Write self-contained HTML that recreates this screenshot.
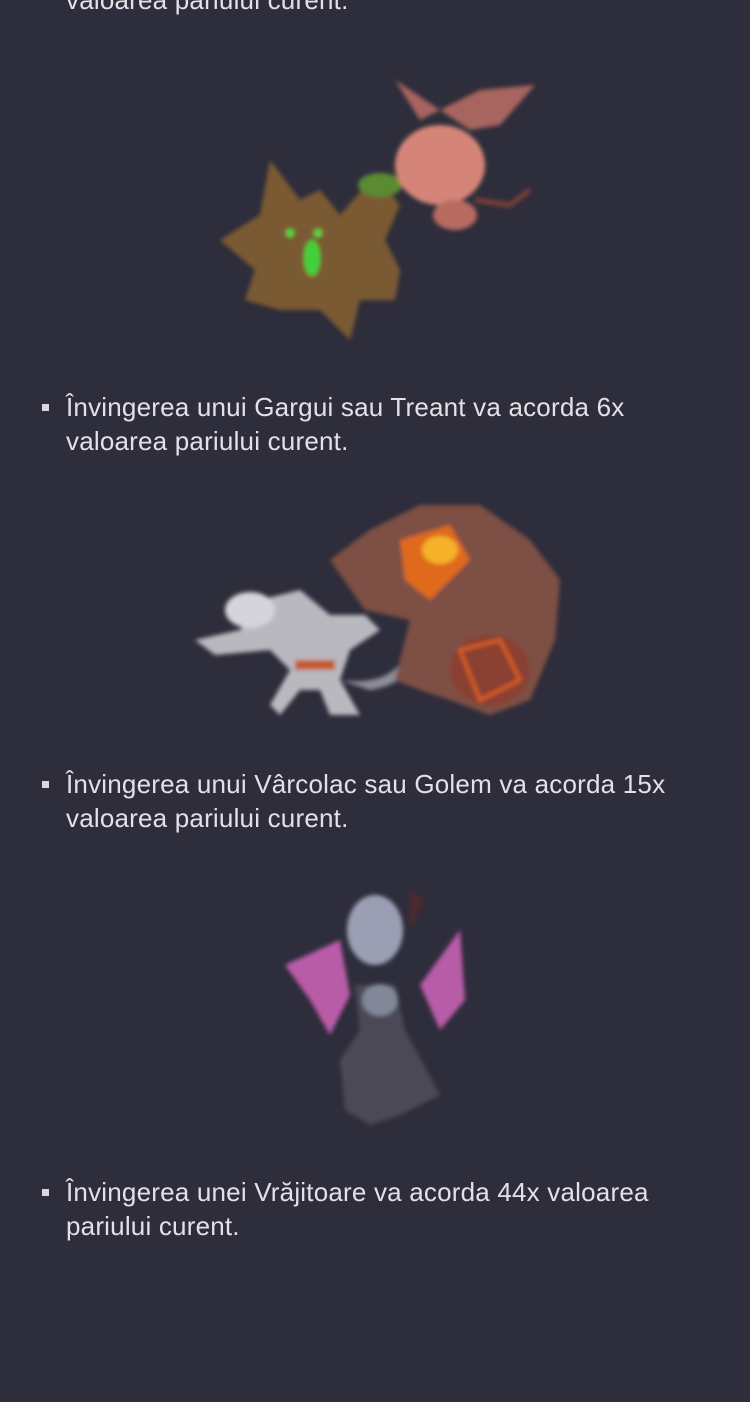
<!DOCTYPE html>
<html><head><meta charset="utf-8"><style>
html,body{margin:0;padding:0}
body{width:750px;height:1402px;background:#2e2d3b;position:relative;overflow:hidden;font-family:"Liberation Sans",sans-serif;color:#e2e2e6}
.t{position:absolute;left:66px;width:625px;font-size:26px;line-height:34px;letter-spacing:0.2px}
.b{position:absolute;left:42px;width:7px;height:7px;background:#d8d8dc}
svg{position:absolute;left:0;top:0}
</style></head><body>
<div class="t" style="top:-17px">valoarea pariului curent.</div>

<svg width="750" height="1402" viewBox="0 0 750 1402">
<defs><filter id="f"><feGaussianBlur stdDeviation="2"/></filter></defs>
<g filter="url(#f)">
<path d="M270 160 L300 200 L320 190 L340 215 L375 175 L400 205 L385 240 L400 270 L395 300 L360 300 L350 340 L320 310 L280 310 L245 300 L255 270 L220 240 L260 215 Z" fill="#7a5a32"/>
<ellipse cx="312" cy="258" rx="8" ry="18" fill="#3fd23a"/>
<circle cx="290" cy="233" r="4" fill="#4fe04a"/><circle cx="318" cy="233" r="4" fill="#4fe04a"/>
<ellipse cx="380" cy="185" rx="22" ry="12" fill="#5c8a30"/>
<path d="M395 80 L420 120 L480 90 L535 85 L500 125 L470 130 Z" fill="#a8655e"/>
<ellipse cx="440" cy="165" rx="45" ry="40" fill="#d58578"/>
<ellipse cx="455" cy="215" rx="22" ry="15" fill="#b86a60"/>
<path d="M475 200 L510 205 L530 190" stroke="#7a4036" stroke-width="5" fill="none"/>
<path d="M195 640 L240 630 L260 600 L300 590 L330 615 L365 615 L380 630 L350 650 L340 680 L360 715 L330 715 L320 690 L300 690 L280 715 L270 705 L290 670 L270 650 L215 655 Z" fill="#b9b8bf"/>
<ellipse cx="250" cy="610" rx="25" ry="18" fill="#d5d4da"/>
<path d="M340 680 Q410 690 415 620 Q430 680 370 690 Z" fill="#8e8d96"/>
<rect x="295" y="660" width="40" height="10" fill="#c45a2c"/>
<path d="M330 560 L370 530 L420 505 L480 505 L530 540 L560 580 L555 640 L530 700 L490 715 L450 700 L420 690 L395 680 L410 620 L365 610 Z" fill="#7e5044"/>
<path d="M400 540 L450 525 L470 560 L430 600 L405 580 Z" fill="#e06a1c"/>
<ellipse cx="440" cy="550" rx="18" ry="14" fill="#f6b22a"/>
<ellipse cx="490" cy="670" rx="40" ry="35" fill="#8a4030"/>
<path d="M460 650 L500 640 L520 680 L480 700 Z" fill="none" stroke="#e8621a" stroke-width="3"/>
<path d="M285 965 L340 940 L350 995 L330 1035 L310 1000 Z" fill="#b95ba8"/>
<path d="M460 930 L465 1000 L440 1030 L420 985 Z" fill="#b95ba8"/>
<ellipse cx="375" cy="930" rx="28" ry="35" fill="#9a9fb3"/>
<path d="M410 890 L425 900 L410 930 Z" fill="#4a2a2e"/>
<path d="M355 985 L395 985 L405 1030 L440 1095 L400 1115 L370 1125 L345 1110 L340 1060 L360 1030 Z" fill="#4c4a56"/>
<ellipse cx="380" cy="1000" rx="18" ry="16" fill="#838899"/>
</g>
</svg>

<div class="b" style="top:404px"></div>
<div class="t" style="top:390px">Învingerea unui Gargui sau Treant va acorda 6x valoarea pariului curent.</div>
<div class="b" style="top:781px"></div>
<div class="t" style="top:767px">Învingerea unui Vârcolac sau Golem va acorda 15x valoarea pariului curent.</div>
<div class="b" style="top:1189px"></div>
<div class="t" style="top:1175px">Învingerea unei Vrăjitoare va acorda 44x valoarea pariului curent.</div>
</body></html>
